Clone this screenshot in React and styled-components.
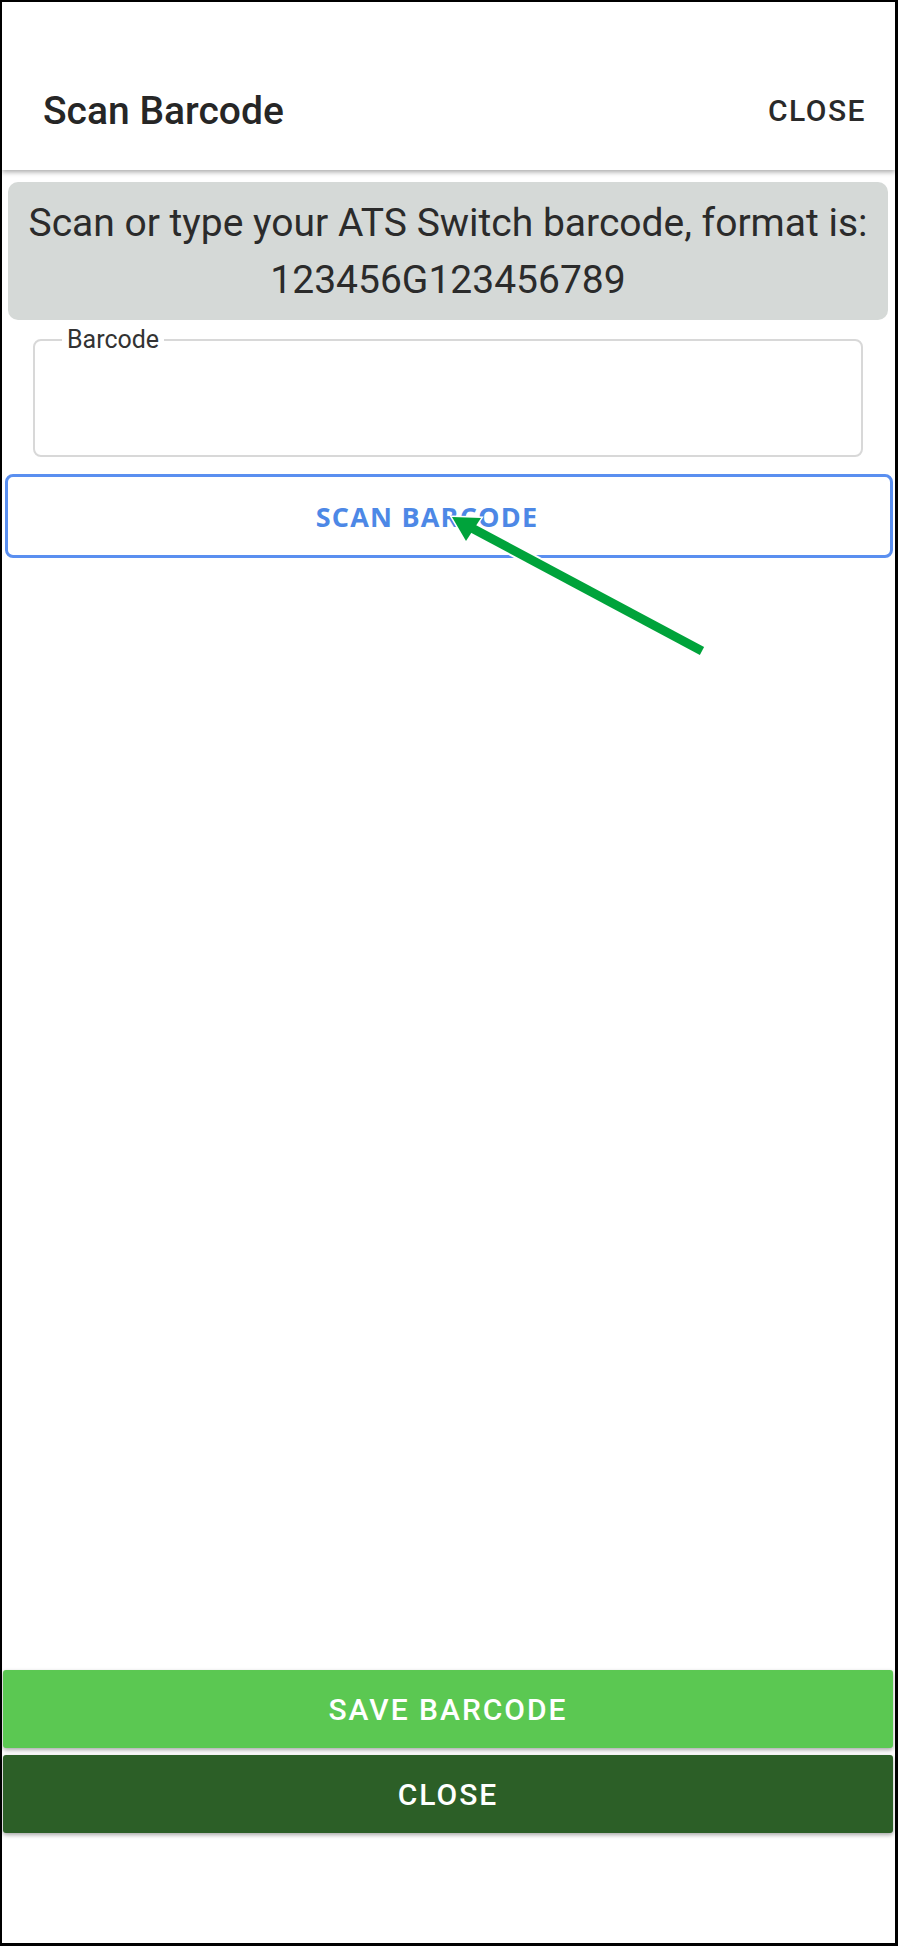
import React from "react";
import styled, { createGlobalStyle } from "styled-components";

const Global = createGlobalStyle`
  html, body { margin: 0; padding: 0; background: #fff; }
  * { box-sizing: border-box; }
`;

const Frame = styled.div`
  position: relative;
  width: 898px;
  height: 1946px;
  border-style: solid;
  border-color: #000;
  border-width: 2px 3px 3px 2px;
  background: #fff;
  display: flex;
  flex-direction: column;
  font-family: Roboto, "Noto Sans", sans-serif;
  overflow: hidden;
`;

const Header = styled.header`
  height: 168px;
  flex: none;
  display: flex;
  align-items: center;
  justify-content: space-between;
  padding: 49px 29px 0 41px;
  background: #fff;
  box-shadow: 0 2px 5px rgba(0, 0, 0, 0.35);
  position: relative;
  z-index: 1;
`;

const Title = styled.h1`
  margin: 0;
  font-size: 39px;
  font-weight: 500;
  color: #262626;
`;

const TextButton = styled.button`
  border: none;
  background: none;
  padding: 0;
  font-family: Roboto, sans-serif;
  font-size: 30px;
  font-weight: 500;
  letter-spacing: 1.5px;
  color: #2a2a2a;
`;

const InfoCard = styled.div`
  margin: 12px 7px 0 6px;
  padding: 13px 6px 11px;
  background: #d5d9d7;
  border-radius: 10px;
  text-align: center;
  font-size: 39px;
  line-height: 57px;
  color: #2b2b2b;
`;

const Field = styled.fieldset`
  margin: 6px 32px 0 31px;
  padding: 0 16px;
  height: 131px;
  border: 2px solid #d8d8d8;
  border-radius: 8px;
`;

const Legend = styled.legend`
  margin-left: 11px;
  padding: 0 5px;
  font-size: 25px;
  line-height: 28px;
  color: #333;
`;

const OutlineButton = styled.button`
  margin: 17px 2px 0 3px;
  height: 84px;
  border: 3.5px solid #5a8ff0;
  border-radius: 8px;
  background: #fff;
  font-family: "Open Sans", "Noto Sans", sans-serif;
  font-weight: 700;
  font-size: 27px;
  letter-spacing: 1.2px;
  color: #4d88e6;
  display: flex;
  align-items: center;
  justify-content: center;
  padding: 0 44px 0 0;
`;

const Spacer = styled.div`
  flex: 1;
`;

const Footer = styled.div`
  display: flex;
  flex-direction: column;
  gap: 7px;
  padding: 0 2px 110px 1px;
`;

const BlockButton = styled.button`
  height: 78px;
  border: none;
  border-radius: 3px;
  background: ${(p) => p.$bg};
  color: #fff;
  font-family: Roboto, sans-serif;
  font-size: 30px;
  font-weight: 500;
  letter-spacing: 2px;
  box-shadow: 0 2px 4px rgba(0, 0, 0, 0.35);
  padding: 0;
`;

const ArrowLayer = styled.svg`
  position: absolute;
  left: -2px;
  top: -2px;
  width: 898px;
  height: 1946px;
  pointer-events: none;
  overflow: visible;
`;

function Arrow() {
  return (
    <ArrowLayer viewBox="0 0 898 1946">
      <g stroke="#fff" strokeWidth="3" strokeLinejoin="miter">
        <line x1="468" y1="526" x2="702" y2="651" strokeWidth="13" />
        <polygon points="452,517 481,518 466,541" />
      </g>
      <line x1="468" y1="526" x2="702" y2="651" stroke="#00a33b" strokeWidth="9" />
      <polygon points="452,517 481,518 466,541" fill="#00a33b" />
    </ArrowLayer>
  );
}

export default function App() {
  return (
    <>
      <Global />
      <Frame>
        <Header>
          <Title>Scan Barcode</Title>
          <TextButton>CLOSE</TextButton>
        </Header>
        <InfoCard>
          Scan or type your ATS Switch barcode, format is:
          <br />
          123456G123456789
        </InfoCard>
        <Field>
          <Legend>Barcode</Legend>
        </Field>
        <OutlineButton>SCAN BARCODE</OutlineButton>
        <Spacer />
        <Footer>
          <BlockButton $bg="#5bc852">SAVE BARCODE</BlockButton>
          <BlockButton $bg="#2c5f27">CLOSE</BlockButton>
        </Footer>
        <Arrow />
      </Frame>
    </>
  );
}
